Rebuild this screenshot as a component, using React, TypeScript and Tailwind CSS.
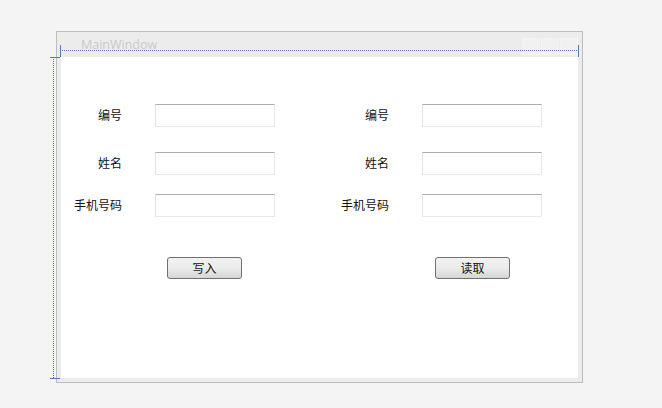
const cjk = { fontFamily: '"Noto Sans CJK SC", "Liberation Sans", sans-serif' }

const Field = ({ label }: { label: string }) => (
  <div className="flex items-center">
    <span className="w-[61px] -mt-[2px] text-right text-[12px] leading-none text-[#111]" style={cjk}>
      {label}
    </span>
    <input
      className="ml-[33px] w-[120px] h-[23px] bg-white border border-[#e3e9ef] border-t-[#abadb3] border-l-[#e2e3ea] outline-none"
      readOnly
    />
  </div>
)

const Column = ({ button, btnOffset }: { button: string; btnOffset: string }) => (
  <div className="flex flex-col w-[214px]">
    <Field label="编号" />
    <div className="mt-[25px]">
      <Field label="姓名" />
    </div>
    <div className="mt-[19px]">
      <Field label="手机号码" />
    </div>
    <button
      className={`mt-[40px] ${btnOffset} w-[75px] h-[22px] rounded-[3px] border border-[#707070] bg-gradient-to-b from-[#f2f2f2] via-[#ebebeb] to-[#d6d6d6] text-[12px] leading-none text-[#111]`}
      style={cjk}
    >
      {button}
    </button>
  </div>
)

export default function App() {
  return (
    <div className="relative w-[662px] h-[408px] bg-[#f4f4f4] pt-[31px] pl-[56px] overflow-hidden">
      <div className="w-[527px] h-[352px] border border-[#bdbdbd] bg-[#ececec] flex flex-col">
        {/* title bar */}
        <div className="h-[25px] flex items-center justify-between pl-[24px] pr-[4px]">
          <span
            className="text-[12.5px] text-[#c9c9c9] mt-[1px]"
            style={{ fontFamily: '"Open Sans", "Liberation Sans", sans-serif' }}
          >
            MainWindow
          </span>
          <div className="flex gap-[1px] self-start mt-[6px]">
            <div className="w-[18px] h-[17px] bg-[#f1f1f1] border border-[#f3f3f3]" />
            <div className="w-[18px] h-[17px] bg-[#f1f1f1] border border-[#f3f3f3]" />
            <div className="w-[18px] h-[17px] bg-[#f1f1f1] border border-[#f3f3f3]" />
          </div>
        </div>
        {/* client area */}
        <div className="mx-[4px] h-[321px] bg-white flex gap-[53px] pt-[47px]">
          <Column button="写入" btnOffset="ml-[106px]" />
          <Column button="读取" btnOffset="ml-[107px]" />
        </div>
      </div>

      {/* designer guides */}
      <div className="absolute left-[60px] top-[50px] w-[519px] border-t border-dotted border-[#5a78b5]" />
      <div className="absolute left-[53px] top-[57px] h-[321px] border-l border-dotted border-[#5a78b5]" />
      <div className="absolute left-[60px] top-[45px] h-[12px] w-px bg-[#5a78b5]" />
      <div className="absolute left-[50px] top-[57px] w-[10px] h-px bg-[#5a78b5]" />
      <div className="absolute left-[50px] top-[378px] w-[10px] h-px bg-[#5a78b5]" />
      <div className="absolute left-[578px] top-[45px] h-[12px] w-px bg-[#5a78b5]" />
    </div>
  )
}
